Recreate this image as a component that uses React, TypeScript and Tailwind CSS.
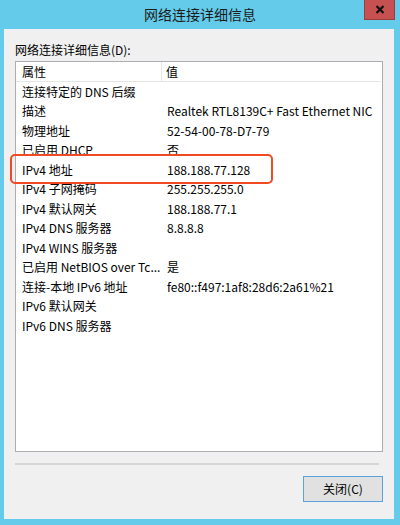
const rows: [string, string][] = [
  ["连接特定的 DNS 后缀", ""],
  ["描述", "Realtek RTL8139C+ Fast Ethernet NIC"],
  ["物理地址", "52-54-00-78-D7-79"],
  ["已启用 DHCP", "否"],
  ["IPv4 地址", "188.188.77.128"],
  ["IPv4 子网掩码", "255.255.255.0"],
  ["IPv4 默认网关", "188.188.77.1"],
  ["IPv4 DNS 服务器", "8.8.8.8"],
  ["IPv4 WINS 服务器", ""],
  ["已启用 NetBIOS over Tc...", "是"],
  ["连接-本地 IPv6 地址", "fe80::f497:1af8:28d6:2a61%21"],
  ["IPv6 默认网关", ""],
  ["IPv6 DNS 服务器", ""],
];

export default function App() {
  return (
    <div
      className="w-[400px] h-[525px] bg-[#64cbea] flex flex-col text-black overflow-hidden"
      style={{ fontFamily: '"Noto Sans CJK SC", "Noto Sans", sans-serif' }}
    >
      {/* title bar */}
      <div className="relative h-[29px] shrink-0 flex items-center justify-center">
        <div className="text-[14px] leading-[18px] text-[#1b1b1b] -mt-[2px]">网络连接详细信息</div>
        <div className="absolute left-[364px] top-0 w-[31px] h-[20px] bg-[#c75050] border border-[#9c3c38] border-t-0 flex items-center justify-center">
          <svg width="10" height="9" viewBox="0 0 10 9">
            <path d="M1.5 1 L8.5 8 M8.5 1 L1.5 8" stroke="#111" strokeWidth="2.2" />
          </svg>
        </div>
      </div>

      {/* client area */}
      <div className="ml-[4px] w-[390px] h-[490px] bg-[#f0f0f0] flex flex-col pl-[11px] pt-[13px]">
        <div className="text-[12px] leading-[16px]">网络连接详细信息(D):</div>

        <div className="relative mt-[3px] w-[368px] h-[391px] bg-white border border-[#abadb3] text-[12px]">
          <div className="flex h-[20px] border-b border-[#e5e5e5] mr-[1px]">
            <div className="w-[146px] border-r border-[#e5e5e5] pl-[6px] leading-[20px]">属性</div>
            <div className="flex-1 pl-[4px] leading-[20px]">值</div>
          </div>
          {rows.map(([k, v]) => (
            <div key={k} className="flex h-[19.5px] items-center">
              <div className="w-[151px] pl-[6px] whitespace-nowrap">{k}</div>
              <div className="flex-1 whitespace-nowrap">{v}</div>
            </div>
          ))}
          <div className="absolute left-[-6px] top-[92px] w-[263px] h-[30px] border-2 border-[#ef4a23] rounded-[5px]" />
        </div>

        <div className="mt-[11px] w-[364px] h-[2px] bg-[#d5d5d5]" />

        <div className="mt-[11px] ml-[288px] w-[80px] h-[26px] bg-[#e1e1e1] border border-[#5aa1dd] flex items-center justify-center text-[12px]">
          关闭(C)
        </div>
      </div>
    </div>
  );
}
